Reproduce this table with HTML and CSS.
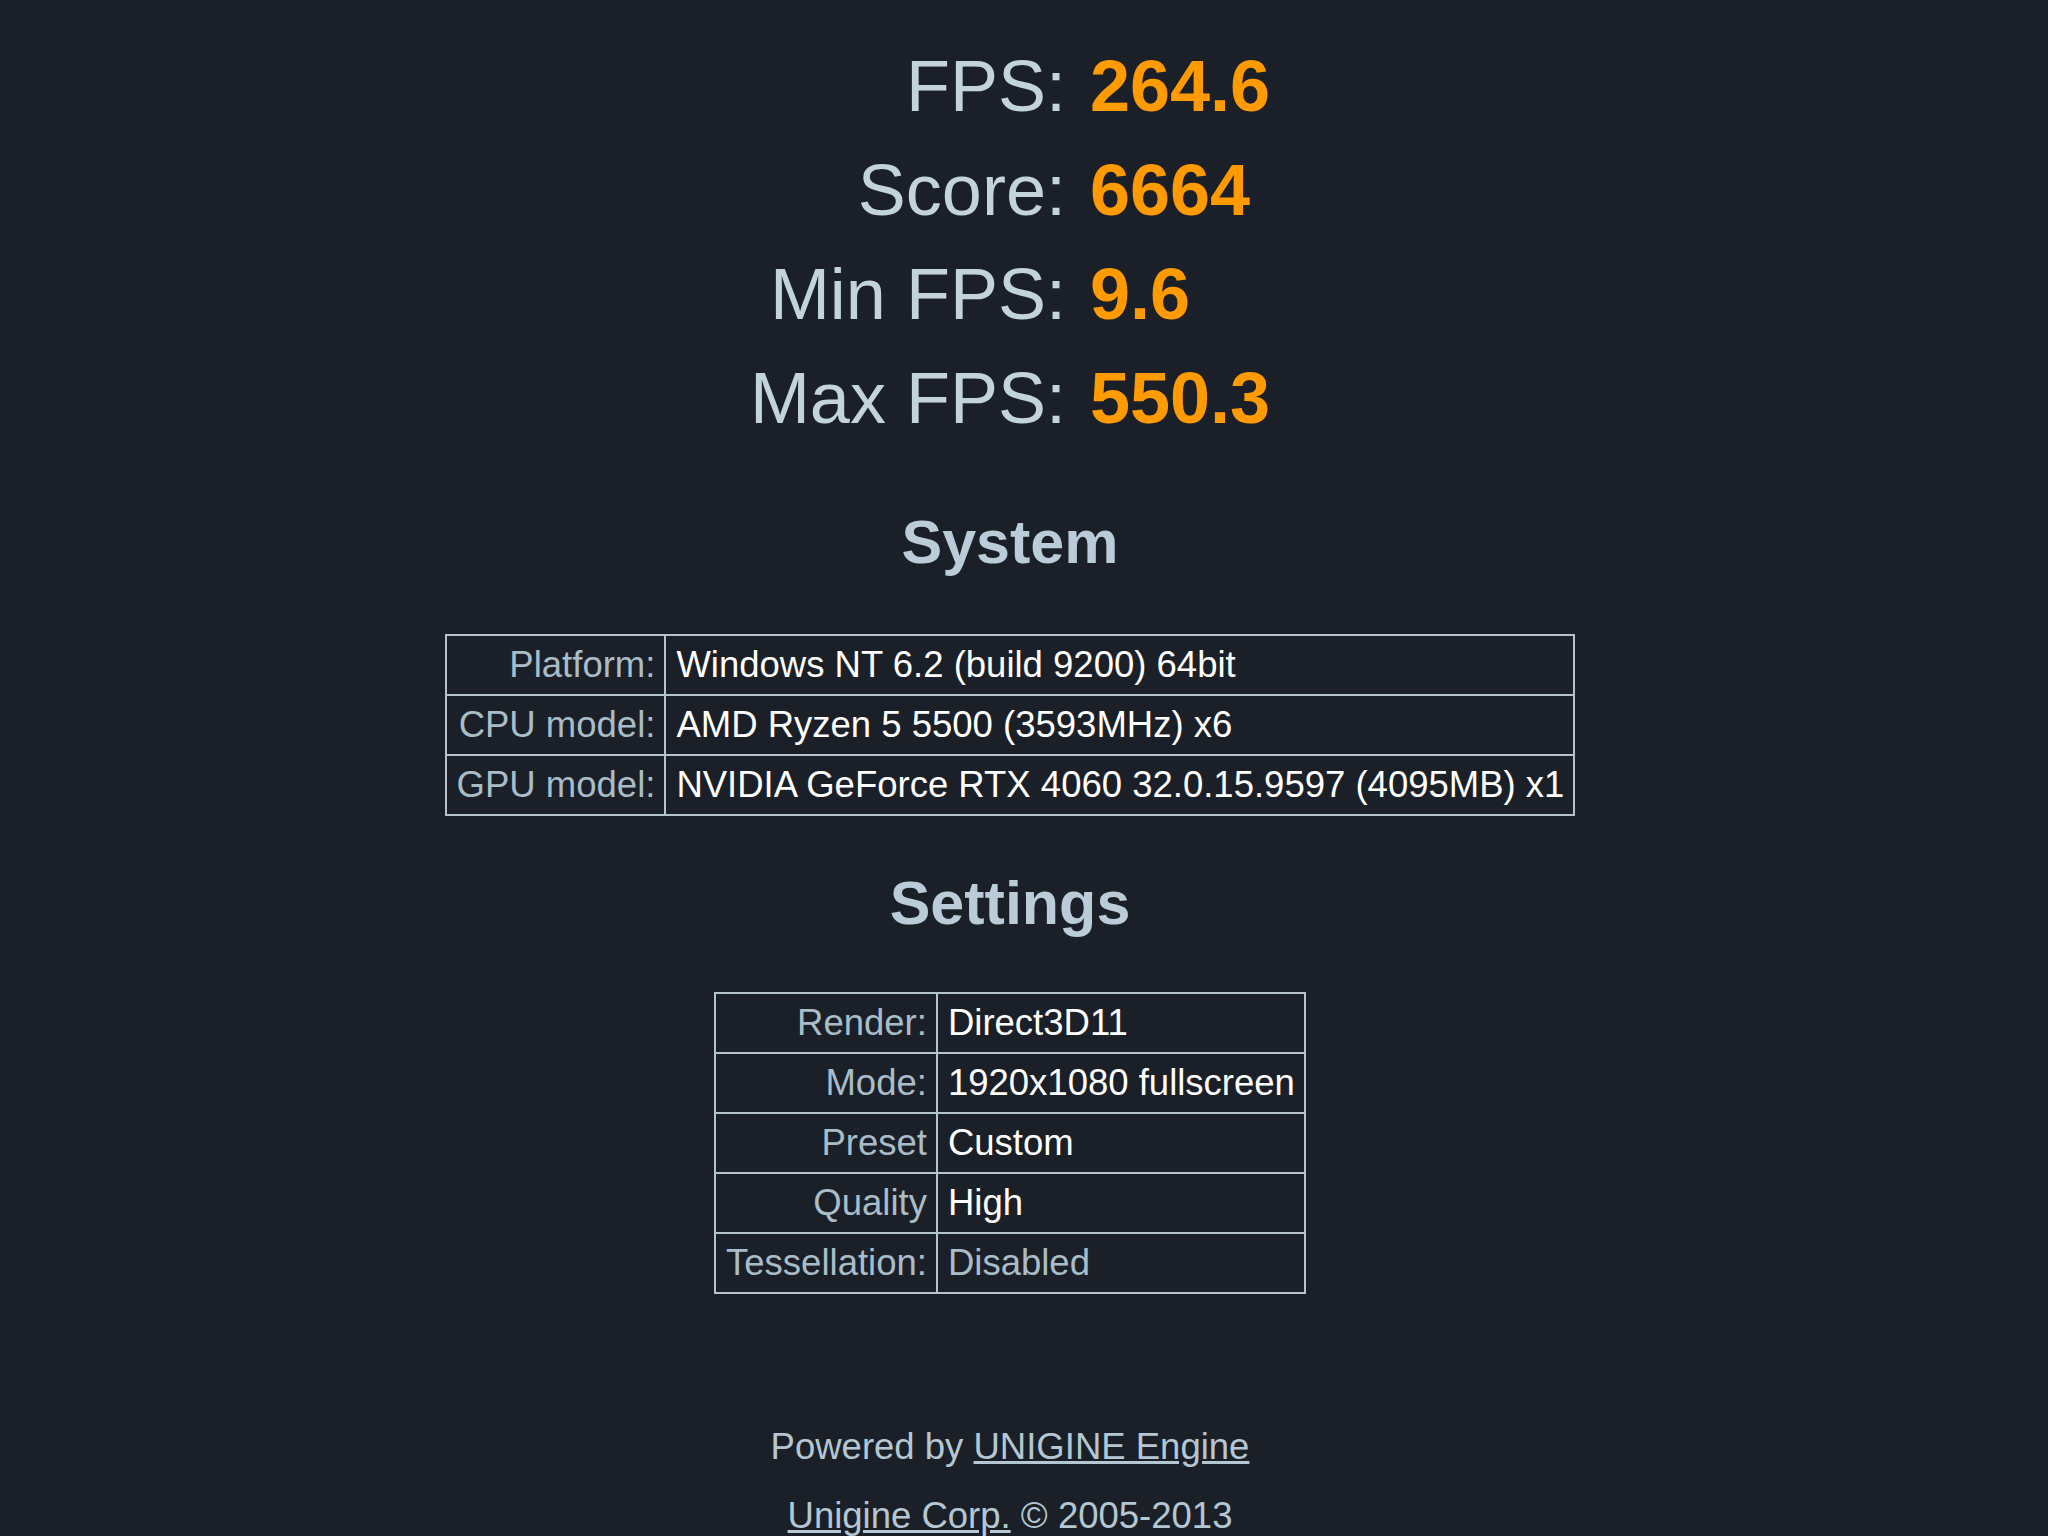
FILE: index.html
```html
<!DOCTYPE html>
<html>
	<head>
		<link rel="stylesheet" href="styles.css">
	</head>
	<body>
		<div class="page">
			<table class="results">
				<tr><td class="rl">FPS:</td><td class="rv">264.6</td></tr>
				<tr><td class="rl">Score:</td><td class="rv">6664</td></tr>
				<tr><td class="rl">Min FPS:</td><td class="rv">9.6</td></tr>
				<tr><td class="rl">Max FPS:</td><td class="rv">550.3</td></tr>
			</table>

			<h2>System</h2>
			<table class="info">
				<tr><td class="il">Platform:</td><td class="iv">Windows NT 6.2 (build 9200) 64bit</td></tr>
				<tr><td class="il">CPU model:</td><td class="iv">AMD Ryzen 5 5500 (3593MHz) x6</td></tr>
				<tr><td class="il">GPU model:</td><td class="iv">NVIDIA GeForce RTX 4060 32.0.15.9597 (4095MB) x1</td></tr>
			</table>

			<h2 class="settings">Settings</h2>
			<table class="info">
				<tr><td class="il">Render:</td><td class="iv">Direct3D11</td></tr>
				<tr><td class="il">Mode:</td><td class="iv">1920x1080 fullscreen</td></tr>
				<tr><td class="il">Preset</td><td class="iv">Custom</td></tr>
				<tr><td class="il">Quality</td><td class="iv">High</td></tr>
				<tr><td class="il">Tessellation:</td><td class="iv off">Disabled</td></tr>
			</table>

			<div class="footer">
				<p>Powered by <a href="#">UNIGINE Engine</a></p>
				<p><a href="#">Unigine Corp.</a> &copy; 2005-2013</p>
			</div>
		</div>
	</body>
</html>
```

FILE: styles.css
```css
html, body{
	margin: 0;
	background-color: #1b2028;
}
body{
	font-family: "Liberation Sans", Arial, sans-serif;
	color: #b4c7d2;
}
.page{
	width: 2020px;
	padding-top: 34px;
	text-align: center;
}
table{
	margin: 0 auto;
	border-collapse: collapse;
}
.results td{
	font-size: 72px;
	line-height: 104px;
	padding: 0;
}
.rl{
	text-align: right;
	color: #c3d3dc;
	padding-right: 12px !important;
}
.rv{
	text-align: left;
	color: #ff9a00;
	font-weight: bold;
	padding-left: 12px !important;
}
h2{
	font-size: 61px;
	line-height: 70px;
	margin: 57px 0 57px;
	color: #b9ccd7;
}
h2.settings{
	margin: 52px 0 54px;
}
.info td{
	border: 2px solid #b2c3cd;
	font-size: 36.5px;
	line-height: 42px;
	padding: 8px 9px 8px 10px;
}
.il{
	text-align: right;
	color: #a9bdc8;
}
.iv{
	text-align: left;
	color: #ffffff;
}
.iv.off{
	color: #a9bdc8;
}
.footer{
	margin-top: 132px;
	font-size: 36.5px;
	color: #b4c7d2;
}
.footer p{
	margin: 0 0 27px;
	line-height: 42px;
}
.footer a{
	color: #b4c7d2;
	text-decoration: underline;
}
```
